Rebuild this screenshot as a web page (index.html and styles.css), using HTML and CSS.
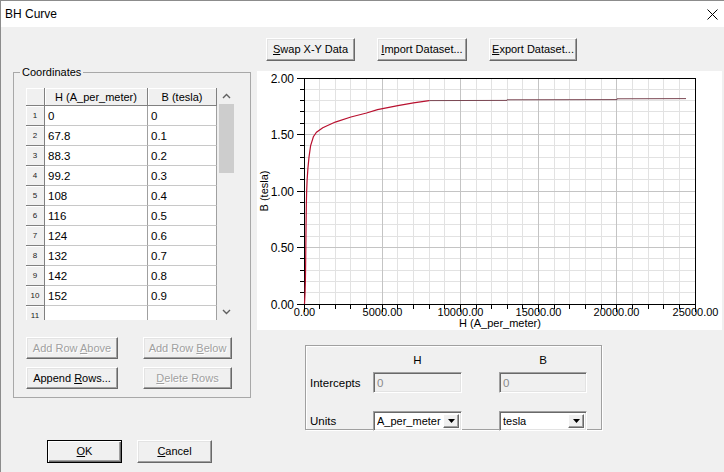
FILE: index.html
```html
<!DOCTYPE html>
<html>
<head>
<meta charset="utf-8">
<title>BH Curve</title>
<link rel="stylesheet" href="styles.css">
</head>
<body>
<div class="window">
  <div class="titlebar">
    <span class="title">BH Curve</span>
    <svg class="close" width="11" height="11" viewBox="0 0 11 11"><path d="M0.5 0.5 L10.5 10.5 M10.5 0.5 L0.5 10.5" stroke="#000" stroke-width="1" fill="none"/></svg>
  </div>
  <div class="content">
    <div class="left">
      <fieldset class="group">
        <legend>Coordinates</legend>
        <div class="tablewrap">
          <div class="table">
            <div class="hc corner"></div>
            <div class="hc colhead">H (A_per_meter)</div>
            <div class="hc colhead">B (tesla)</div>

            <div class="hc rowhead">1</div><div class="cell">0</div><div class="cell">0</div>
            <div class="hc rowhead">2</div><div class="cell">67.8</div><div class="cell">0.1</div>
            <div class="hc rowhead">3</div><div class="cell">88.3</div><div class="cell">0.2</div>
            <div class="hc rowhead">4</div><div class="cell">99.2</div><div class="cell">0.3</div>
            <div class="hc rowhead">5</div><div class="cell">108</div><div class="cell">0.4</div>
            <div class="hc rowhead">6</div><div class="cell">116</div><div class="cell">0.5</div>
            <div class="hc rowhead">7</div><div class="cell">124</div><div class="cell">0.6</div>
            <div class="hc rowhead">8</div><div class="cell">132</div><div class="cell">0.7</div>
            <div class="hc rowhead">9</div><div class="cell">142</div><div class="cell">0.8</div>
            <div class="hc rowhead">10</div><div class="cell">152</div><div class="cell">0.9</div>
            <div class="hc rowhead">11</div><div class="cell"></div><div class="cell"></div>
          </div>
          <div class="scrollbar">
            <div class="arrow"><svg width="9" height="6" viewBox="0 0 9 6"><path d="M1 5 L4.5 1.5 L8 5" stroke="#606060" stroke-width="1.4" fill="none"/></svg></div>
            <div class="thumb"></div>
            <div class="track"></div>
            <div class="arrow"><svg width="9" height="6" viewBox="0 0 9 6"><path d="M1 1 L4.5 4.5 L8 1" stroke="#606060" stroke-width="1.4" fill="none"/></svg></div>
          </div>
        </div>
        <div class="rowbtns">
          <button class="btn" disabled>Add Row <u>A</u>bove</button>
          <button class="btn" disabled>Add Row <u>B</u>elow</button>
          <button class="btn">Append <u>R</u>ows...</button>
          <button class="btn" disabled><u>D</u>elete Rows</button>
        </div>
      </fieldset>
      <div class="dlgbtns">
        <button class="btn default"><u>O</u>K</button>
        <button class="btn"><u>C</u>ancel</button>
      </div>
    </div>
    <div class="right">
      <div class="topbtns">
        <button class="btn b-swap"><u>S</u>wap X-Y Data</button>
        <button class="btn b-import"><u>I</u>mport Dataset...</button>
        <button class="btn b-export"><u>E</u>xport Dataset...</button>
      </div>
      <div class="chart">
        <svg width="465" height="259" viewBox="0 0 465 259">
          <g class="minor" stroke="#e2e2e2" stroke-width="1">
            <path d="M62.5 8 V233 M78.5 8 V233 M93.5 8 V233 M109.5 8 V233 M140.5 8 V233 M156.5 8 V233 M172.5 8 V233 M187.5 8 V233 M219.5 8 V233 M234.5 8 V233 M250.5 8 V233 M265.5 8 V233 M297.5 8 V233 M312.5 8 V233 M328.5 8 V233 M344.5 8 V233 M375.5 8 V233 M391.5 8 V233 M406.5 8 V233 M422.5 8 V233"/>
            <path d="M48 221.5 H438 M48 210.5 H438 M48 199.5 H438 M48 187.5 H438 M48 165.5 H438 M48 153.5 H438 M48 142.5 H438 M48 131.5 H438 M48 108.5 H438 M48 97.5 H438 M48 86.5 H438 M48 74.5 H438 M48 52.5 H438 M48 40.5 H438 M48 29.5 H438 M48 18.5 H438"/>
          </g>
          <g class="major" stroke="#c4c4c4" stroke-width="1">
            <path d="M125.5 8 V233 M203.5 8 V233 M281.5 8 V233 M359.5 8 V233"/>
            <path d="M48 176.5 H438 M48 120.5 H438 M48 63.5 H438"/>
          </g>
          <rect x="47.5" y="7.5" width="391" height="226" fill="none" stroke="#000" stroke-width="1"/>
          <g stroke="#000" stroke-width="1">
            <path d="M40 7.5 H47 M40 63.5 H47 M40 120.5 H47 M40 176.5 H47 M40 233.5 H47"/>
            <path d="M43 18.5 H47 M43 29.5 H47 M43 40.5 H47 M43 52.5 H47 M43 74.5 H47 M43 86.5 H47 M43 97.5 H47 M43 108.5 H47 M43 131.5 H47 M43 142.5 H47 M43 153.5 H47 M43 165.5 H47 M43 187.5 H47 M43 199.5 H47 M43 210.5 H47 M43 221.5 H47"/>
            <path d="M47.5 234 V241 M125.5 234 V241 M203.5 234 V241 M281.5 234 V241 M359.5 234 V241 M438.5 234 V241"/>
            <path d="M62.5 234 V238 M78.5 234 V238 M93.5 234 V238 M109.5 234 V238 M140.5 234 V238 M156.5 234 V238 M172.5 234 V238 M187.5 234 V238 M219.5 234 V238 M234.5 234 V238 M250.5 234 V238 M265.5 234 V238 M297.5 234 V238 M312.5 234 V238 M328.5 234 V238 M344.5 234 V238 M375.5 234 V238 M391.5 234 V238 M406.5 234 V238 M422.5 234 V238"/>
          </g>
          <path d="M47.5 233 L48.06 221.7 L48.38 210.4 L48.55 199.1 L48.69 187.8 L48.81 176.5 L48.94 165.2 L49.06 153.9 L49.22 142.6 L49.38 131.3 L49.66 120 L50.13 108.7 L50.91 97.4 L52 86.1 L53.57 74.8 L56.38 65.76 L59.51 61.24 L65.77 56.72 L78.28 51.07 L93.92 45.99 L109.56 42.03 L120.5 38.64 L140.84 34.69 L156.48 31.86 L172.12 29.6" fill="none" stroke="#b8102f" stroke-width="1.2"/>
          <path d="M172.12 29.6 L250 29.4 L250 28.8 L360 28.6 L360 27.8 L429 27.6" fill="none" stroke="#7a4652" stroke-width="1"/>
          <g class="ylab" font-size="12" text-anchor="end" fill="#000">
            <text x="37" y="11.5">2.00</text>
            <text x="37" y="68">1.50</text>
            <text x="37" y="124.5">1.00</text>
            <text x="37" y="181">0.50</text>
            <text x="37" y="237.5">0.00</text>
          </g>
          <g class="xlab" font-size="11" text-anchor="middle" fill="#000">
            <text x="47.5" y="245">0.00</text>
            <text x="125.5" y="245">5000.00</text>
            <text x="203.5" y="245">10000.00</text>
            <text x="281.5" y="245">15000.00</text>
            <text x="359.5" y="245">20000.00</text>
            <text x="438.5" y="245">25000.00</text>
          </g>
          <text class="axtitle" x="243" y="256" font-size="11" text-anchor="middle">H (A_per_meter)</text>
          <text class="axtitle" transform="translate(11,120) rotate(-90)" font-size="11" text-anchor="middle">B (tesla)</text>
        </svg>
      </div>
      <div class="axesbox">
        <div class="hdr c-h">H</div>
        <div class="hdr c-b">B</div>
        <div class="lbl r-int">Intercepts</div>
        <div class="field r-int c-h">0</div>
        <div class="field r-int c-b">0</div>
        <div class="lbl r-units">Units</div>
        <div class="select r-units c-h"><span class="val">A_per_meter</span><span class="drop"><svg width="7" height="4" viewBox="0 0 7 4"><path d="M0 0 H7 L3.5 4 Z" fill="#000"/></svg></span></div>
        <div class="select r-units c-b"><span class="val">tesla</span><span class="drop"><svg width="7" height="4" viewBox="0 0 7 4"><path d="M0 0 H7 L3.5 4 Z" fill="#000"/></svg></span></div>
      </div>
    </div>
  </div>
</div>
</body>
</html>
```

FILE: styles.css
```css
* { box-sizing: border-box; }
html, body { margin: 0; padding: 0; }
body {
  width: 724px;
  height: 472px;
  overflow: hidden;
  background: #f0f0f0;
  font-family: "Liberation Sans", Arial, sans-serif;
  font-size: 11px;
  color: #000;
}
.window {
  width: 724px;
  height: 472px;
  border-top: 1px solid #8c8c8c;
  border-left: 1px solid #8c8c8c;
  background: #f0f0f0;
  display: flex;
  flex-direction: column;
}
.titlebar {
  height: 26px;
  flex: none;
  background: #fff;
  display: flex;
  align-items: center;
  justify-content: space-between;
  padding: 0 6px 0 4px;
}
.title { font-size: 12px; }
.close { display: block; }

.content { flex: 1; display: flex; }
.left {
  width: 256px;
  flex: none;
  padding-left: 12px;
  display: flex;
  flex-direction: column;
}
.group {
  margin: 39px 0 0 0;
  padding: 0;
  width: 238px;
  height: 332px;
  border: 1px solid #a8a8a8;
  min-inline-size: 0;
}
.group legend {
  margin-left: 6px;
  padding: 0 2px;
  line-height: 13px;
  font-size: 11px;
}
.tablewrap {
  display: flex;
  margin: 9px 0 0 12px;
  width: 209px;
  height: 232px;
}
.table {
  width: 191px;
  height: 232px;
  overflow: hidden;
  display: grid;
  grid-template-columns: 19px 103px 69px;
  grid-template-rows: 18px;
  grid-auto-rows: 20px;
  background: #fff;
}
.hc {
  background: #f0f0f0;
  border-right: 1px solid #808080;
  border-bottom: 1px solid #808080;
  box-shadow: inset 1px 1px 0 #fff;
}
.colhead {
  display: flex;
  align-items: center;
  justify-content: center;
  padding-top: 1px;
}
.rowhead {
  font-size: 8px;
  display: flex;
  align-items: center;
  justify-content: center;
  color: #222;
}
.cell {
  background: #fff;
  border-right: 1px solid #a0a0a0;
  border-bottom: 1px solid #c8c8c8;
  padding-left: 3px;
  display: flex;
  align-items: center;
  font-size: 11.5px;
}
.scrollbar {
  width: 18px;
  height: 232px;
  display: flex;
  flex-direction: column;
  align-items: center;
  background: #f0f0f0;
}
.arrow {
  height: 16px;
  width: 18px;
  display: flex;
  align-items: center;
  justify-content: center;
  flex: none;
}
.thumb {
  width: 15px;
  height: 69px;
  background: #cdcdcd;
  flex: none;
}
.track { flex: 1; }

.btn {
  display: block;
  font-family: inherit;
  font-size: 11px;
  height: 23px;
  line-height: 21px;
  margin: 0;
  padding: 0;
  text-align: center;
  background: #f0f0f0;
  color: #000;
  border: 1px solid;
  border-color: #fff #696969 #696969 #fff;
  box-shadow: inset -1px -1px 0 #a0a0a0, inset 1px 1px 0 #e3e3e3;
  white-space: nowrap;
}
.btn:disabled {
  color: #a0a0a0;
  text-shadow: 1px 1px 0 #fff;
}
.btn.default {
  border-color: #000;
  box-shadow: inset 1px 1px 0 #fff, inset -1px -1px 0 #696969, inset -2px -2px 0 #a0a0a0;
}
.rowbtns {
  display: grid;
  grid-template-columns: 92px 89px;
  column-gap: 25px;
  row-gap: 8px;
  margin: 17px 0 0 12px;
}
.rowbtns .btn { height: 22px; line-height: 20px; }
.dlgbtns {
  display: flex;
  gap: 15px;
  margin: 42px 0 0 34px;
}
.dlgbtns .btn { width: 75px; }

.right {
  flex: 1;
  padding-top: 11px;
  display: flex;
  flex-direction: column;
}
.topbtns {
  display: flex;
  gap: 22px;
  padding-left: 9px;
}
.b-swap { width: 89px; }
.b-import { width: 90px; }
.b-export { width: 88px; }
.chart {
  margin-top: 10px;
  width: 465px;
  height: 259px;
  background: #fff;
}
.chart svg { display: block; font-family: "Liberation Sans", Arial, sans-serif; }

.axesbox {
  margin: 15px 0 0 48px;
  width: 297px;
  height: 85px;
  border: 1px solid #a0a0a0;
  box-shadow: inset 1px 1px 0 #fff, 1px 1px 0 #fff;
  padding: 7px 0 0 4px;
  display: grid;
  grid-template-columns: 63px 89px 37px 88px;
  grid-template-rows: 14px 26px 38px;
  align-items: end;
}
.hdr { grid-row: 1; text-align: center; align-self: center; font-size: 11.5px; }
.c-h { grid-column: 2; }
.c-b { grid-column: 4; }
.r-int { grid-row: 2; }
.r-units { grid-row: 3; }
.lbl { grid-column: 1; height: 21px; display: flex; align-items: center; font-size: 11.5px; }
.r-units.lbl { height: 20px; }
.field {
  height: 21px;
  background: #f0f0f0;
  border: 1px solid;
  border-color: #a0a0a0 #fff #fff #a0a0a0;
  box-shadow: inset 1px 1px 0 #696969, inset -1px -1px 0 #e3e3e3;
  color: #8a8a8a;
  padding-left: 3px;
  display: flex;
  align-items: center;
  font-size: 11.5px;
}
.select {
  height: 20px;
  background: #fff;
  border: 1px solid;
  border-color: #a0a0a0 #fff #fff #a0a0a0;
  box-shadow: inset 1px 1px 0 #696969, inset -1px -1px 0 #e3e3e3;
  padding: 2px 2px 2px 3px;
  display: flex;
  align-items: center;
  font-size: 11px;
}
.select .val { flex: 1; white-space: nowrap; overflow: hidden; }
.drop {
  width: 16px;
  height: 14px;
  flex: none;
  background: #f0f0f0;
  border: 1px solid;
  border-color: #fff #696969 #696969 #fff;
  box-shadow: inset -1px -1px 0 #a0a0a0;
  display: flex;
  align-items: center;
  justify-content: center;
}
.drop svg { display: block; }
```
